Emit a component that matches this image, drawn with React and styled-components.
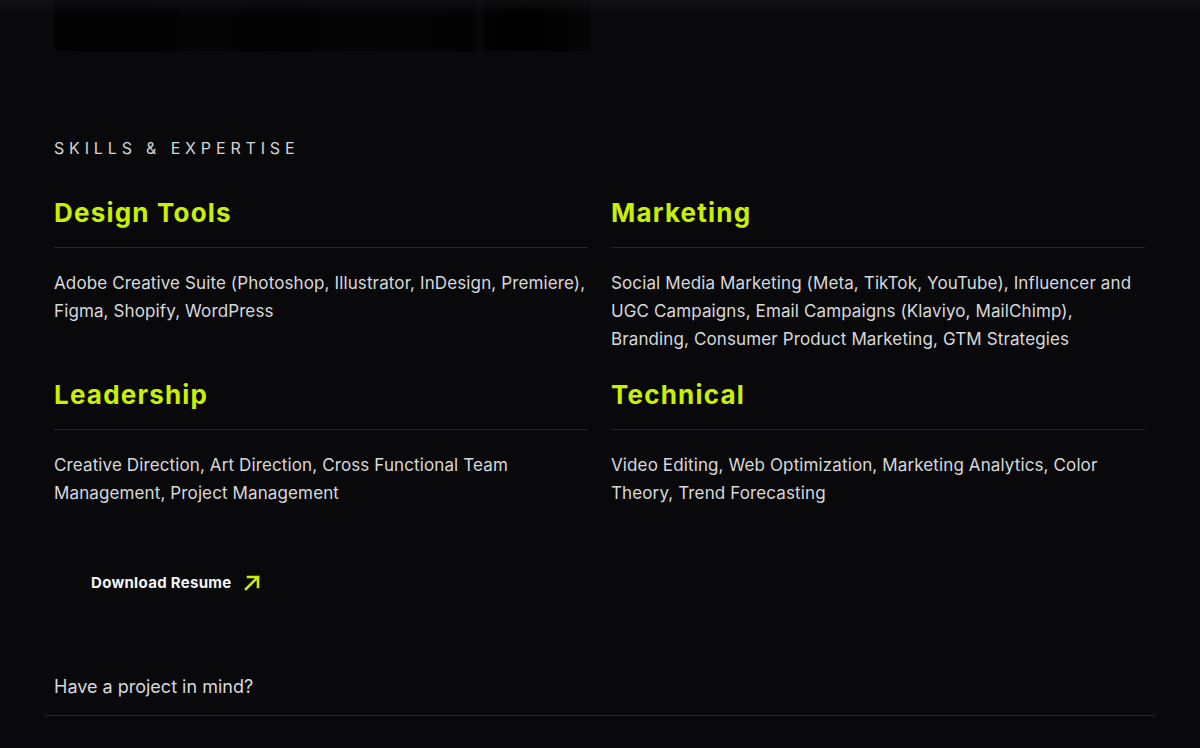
import React from "react";
import styled, { createGlobalStyle } from "styled-components";

const Global = createGlobalStyle`
  html, body { margin: 0; padding: 0; background: #09090b; }
  body { font-family: Inter, "Noto Sans", sans-serif; color: #d4d4d8; }
  * { box-sizing: border-box; }
`;

const Page = styled.div`
  position: relative;
  width: 1200px;
  height: 748px;
  overflow: hidden;
  background: #09090b;
`;

const TopFade = styled.div`
  position: absolute;
  left: 0;
  right: 0;
  top: 0;
  height: 14px;
  background: linear-gradient(to bottom, rgba(24, 24, 27, 0.55), rgba(9, 9, 11, 0));
  pointer-events: none;
`;

const Section = styled.section`
  padding: 0 55px 0 54px;
  display: flex;
  flex-direction: column;
`;

const Media = styled.div`
  width: 536px;
  height: 51px;
  border-radius: 0 0 5px 5px;
  background: linear-gradient(
    90deg,
    #020203 0%,
    #030304 22%,
    #050506 26%,
    #020203 40%,
    #040405 55%,
    #030304 78%,
    #08080a 79.5%,
    #020203 81%,
    #000 88%,
    #050506 100%
  );
`;

const Eyebrow = styled.h2`
  margin: 87px 0 0;
  font-size: 16px;
  line-height: 20px;
  font-weight: 400;
  letter-spacing: 4.85px;
  color: #d4d4d8;
`;

const Grid = styled.div`
  margin-top: 39px;
  display: grid;
  grid-template-columns: 534px 534px;
  column-gap: 23px;
  row-gap: 26px;
`;

const Group = styled.div`
  display: flex;
  flex-direction: column;
`;

const GroupTitle = styled.h3`
  margin: 0;
  font-size: 26px;
  line-height: 32px;
  font-weight: 700;
  letter-spacing: 1.2px;
  color: #c8f000;
  padding-bottom: 18px;
  border-bottom: 1px solid #27272a;
`;

const GroupBody = styled.p`
  margin: 21px 0 0;
  font-size: 17px;
  line-height: 28px;
  letter-spacing: 0.12px;
  color: #d8d8dc;
`;

const ResumeButton = styled.a`
  align-self: flex-start;
  margin-top: 52px;
  display: inline-flex;
  align-items: center;
  gap: 11px;
  padding: 14px 37px;
  font-size: 15px;
  font-weight: 700;
  letter-spacing: 0.3px;
  color: #f4f4f5;
  text-decoration: none;
`;

const Footer = styled.footer`
  margin: 68px 45px 0;
  border-bottom: 1px solid #27272a;
  padding: 0 9px 15px;
`;

const Prompt = styled.p`
  margin: 0;
  font-size: 18px;
  line-height: 26px;
  color: #d8d8dc;
`;

const Arrow = () => (
  <svg width="18" height="18" viewBox="0 0 18 18" fill="none">
    <path d="M3 15 L15 3 M5 3 H15 V13" stroke="#c8f000" strokeWidth="2.6" strokeLinecap="square" />
  </svg>
);

const groups = [
  {
    title: "Design Tools",
    body: "Adobe Creative Suite (Photoshop, Illustrator, InDesign, Premiere), Figma, Shopify, WordPress",
  },
  {
    title: "Marketing",
    body: "Social Media Marketing (Meta, TikTok, YouTube), Influencer and UGC Campaigns, Email Campaigns (Klaviyo, MailChimp), Branding, Consumer Product Marketing, GTM Strategies",
  },
  {
    title: "Leadership",
    body: "Creative Direction, Art Direction, Cross Functional Team Management, Project Management",
  },
  {
    title: "Technical",
    body: "Video Editing, Web Optimization, Marketing Analytics, Color Theory, Trend Forecasting",
  },
];

export default function App() {
  return (
    <>
      <Global />
      <Page>
        <Section>
          <Media />
          <Eyebrow>SKILLS &amp; EXPERTISE</Eyebrow>
          <Grid>
            {groups.map((g) => (
              <Group key={g.title}>
                <GroupTitle>{g.title}</GroupTitle>
                <GroupBody>{g.body}</GroupBody>
              </Group>
            ))}
          </Grid>
          <ResumeButton href="#resume">
            Download Resume
            <Arrow />
          </ResumeButton>
        </Section>
        <Footer>
          <Prompt>Have a project in mind?</Prompt>
        </Footer>
        <TopFade />
      </Page>
    </>
  );
}
